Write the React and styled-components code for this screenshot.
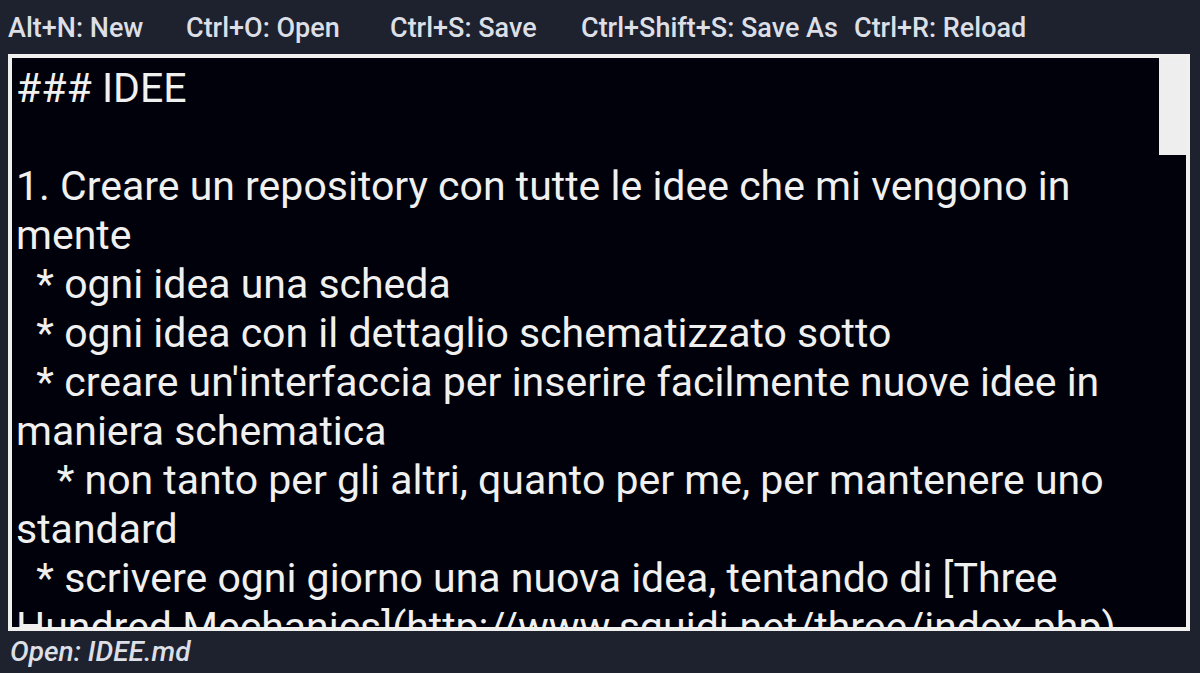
import React, { useState } from 'react';
import styled, { createGlobalStyle } from 'styled-components';

const Global = createGlobalStyle`
  * { box-sizing: border-box; }
  body { margin: 0; background: #1e222f; font-family: Roboto, sans-serif; }
`;

const Window = styled.main`
  display: flex;
  flex-direction: column;
  height: 100vh;
  padding: 0 10px 0 8px;
  background: #1e222f;
  color: #dcdfe6;
`;

const Toolbar = styled.nav`
  display: flex;
  flex: none;
  height: 54px;
  padding-top: 2px;
  align-items: center;
`;

const Command = styled.button`
  flex: none;
  width: ${(p) => p.$width}px;
  padding: 0;
  border: 0;
  background: none;
  color: inherit;
  font: 500 27px/32px Roboto, sans-serif;
  text-align: left;
  white-space: nowrap;
`;

const EditorFrame = styled.section`
  display: flex;
  flex: 1;
  min-height: 0;
  border: 4px solid #f0f0ee;
  background: #00010a;
`;

const Editor = styled.textarea`
  flex: 1;
  min-width: 0;
  padding: 6px 4px 0;
  border: 0;
  outline: 0;
  resize: none;
  overflow-y: auto;
  scrollbar-width: none;
  background: transparent;
  color: #f0f0f0;
  font: 41px/49px Roboto, sans-serif;
  white-space: pre-wrap;
`;

const ScrollTrack = styled.div`
  display: flex;
  flex: none;
  flex-direction: column;
  width: 27px;
`;

const ScrollSpace = styled.div`
  flex: none;
`;

const ScrollThumb = styled.div`
  flex: none;
  height: 17%;
  background: #eeeeee;
`;

const Status = styled.footer`
  flex: none;
  height: 42px;
  padding-left: 2px;
  font: italic 500 28px/42px Roboto, sans-serif;
`;

const commands = [
  ['Alt+N: New', 178],
  ['Ctrl+O: Open', 204],
  ['Ctrl+S: Save', 191],
  ['Ctrl+Shift+S: Save As', 273],
  ['Ctrl+R: Reload', 180],
];

const note = `### IDEE

1. Creare un repository con tutte le idee che mi vengono in mente
  * ogni idea una scheda
  * ogni idea con il dettaglio schematizzato sotto
  * creare un'interfaccia per inserire facilmente nuove idee in maniera schematica
    * non tanto per gli altri, quanto per me, per mantenere uno standard
  * scrivere ogni giorno una nuova idea, tentando di [Three Hundred Mechanics](http://www.squidi.net/three/index.php)
`;

export default function App() {
  const [progress, setProgress] = useState(0);

  const handleScroll = ({ currentTarget: el }) => {
    const range = el.scrollHeight - el.clientHeight;
    setProgress(range > 0 ? el.scrollTop / range : 0);
  };

  return (
    <Window>
      <Global />
      <Toolbar aria-label="Commands">
        {commands.map(([label, width]) => (
          <Command key={label} type="button" $width={width}>{label}</Command>
        ))}
      </Toolbar>
      <EditorFrame>
        <Editor
          aria-label="Document"
          spellCheck={false}
          defaultValue={note}
          onScroll={handleScroll}
        />
        <ScrollTrack aria-hidden="true">
          <ScrollSpace style={{ height: `${progress * 83}%` }} />
          <ScrollThumb />
        </ScrollTrack>
      </EditorFrame>
      <Status>Open: IDEE.md</Status>
    </Window>
  );
}
